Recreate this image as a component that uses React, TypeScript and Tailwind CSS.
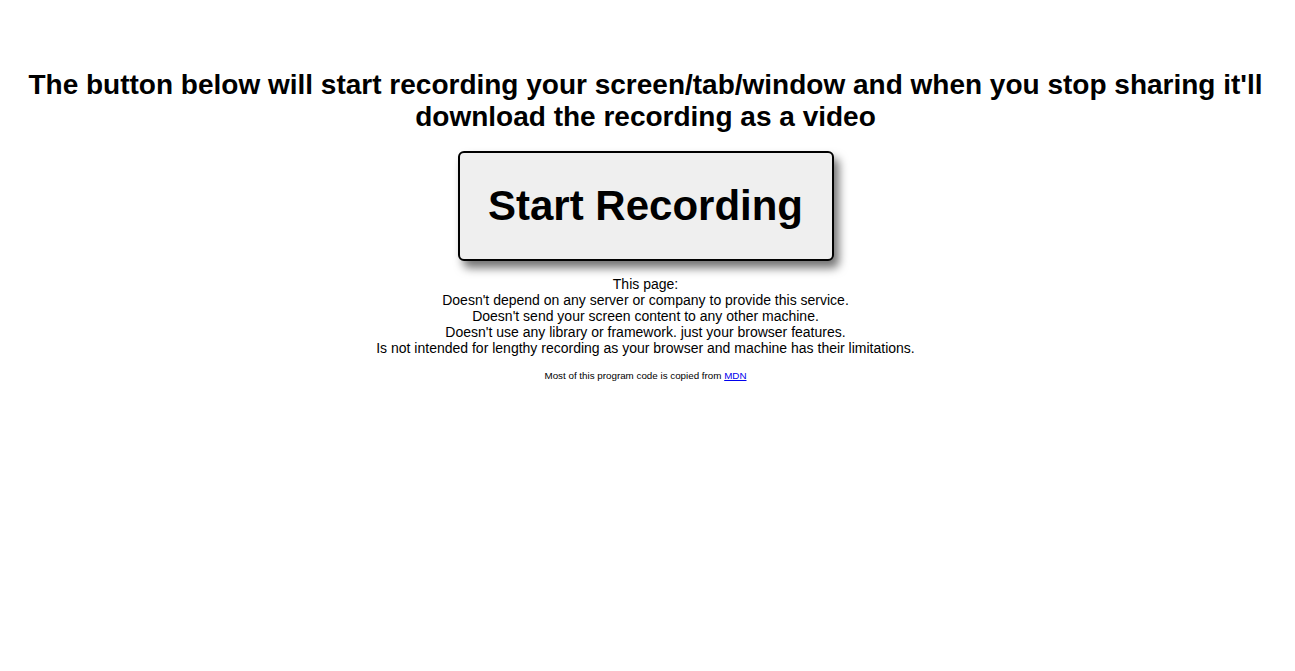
export default function App() {
  return (
    <div className="min-h-screen bg-white text-black font-['Liberation_Sans',Arial,sans-serif] text-center pr-[4px]">
      <h1 className="pt-[69px] px-6 text-[28px] leading-[32px] font-bold">
        The button below will start recording your screen/tab/window and when you stop sharing it'll download the
        recording as a video
      </h1>

      <div className="flex justify-center mt-[18px]">
        <button className="w-[376px] h-[110px] pb-[1px] bg-[#efefef] border-2 border-black rounded-md shadow-[5px_7px_10px_rgba(0,0,0,0.55)] text-[42px] font-bold">
          Start Recording
        </button>
      </div>

      <div className="mt-[15px] text-[14px] leading-4">
        <div>This page:</div>
        <div>Doesn't depend on any server or company to provide this service.</div>
        <div>Doesn't send your screen content to any other machine.</div>
        <div>Doesn't use any library or framework. just your browser features.</div>
        <div>Is not intended for lengthy recording as your browser and machine has their limitations.</div>
      </div>

      <p className="mt-[14px] text-[9.8px] leading-[11px]">
        Most of this program code is copied from{' '}
        <a href="#" className="text-[#0000ee] underline">
          MDN
        </a>
      </p>
    </div>
  );
}
